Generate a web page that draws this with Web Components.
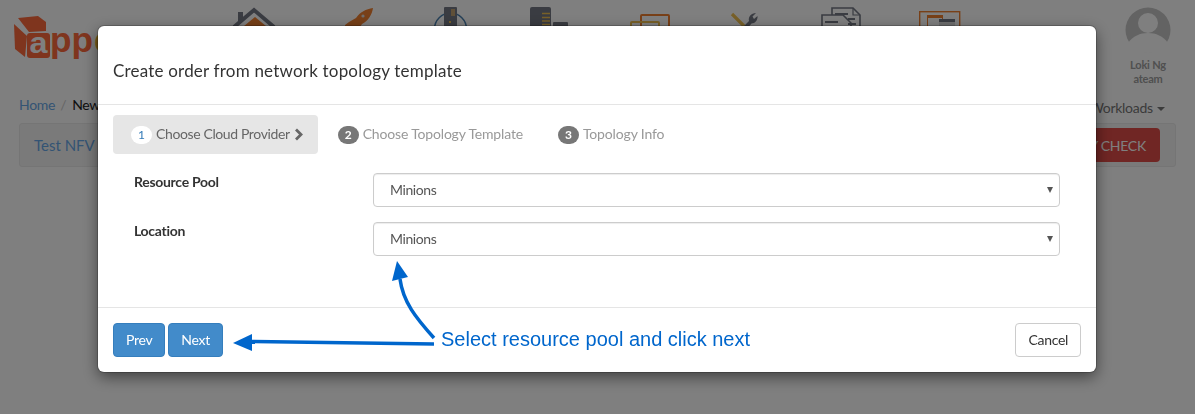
<!DOCTYPE html>
<html>
<head>
<meta charset="utf-8">
<title>Create order</title>
<style>
  html, body { margin: 0; height: 100%; background: #fff; overflow: hidden; }
  body { font-family: "Lato", "Liberation Sans", sans-serif; font-size: 14px; color: #333; }
</style>
</head>
<body>
<app-page></app-page>
<order-modal title="Create order from network topology template">
  <wizard-step slot="steps" num="1" track="-.38" active>Choose Cloud Provider</wizard-step>
  <wizard-step slot="steps" num="2" track="-.17">Choose Topology Template</wizard-step>
  <wizard-step slot="steps" num="3" track="-.15">Topology Info</wizard-step>
  <form-row slot="form" label="Resource Pool" value="Minions"></form-row>
  <form-row slot="form" label="Location" value="Minions"></form-row>
  <modal-button slot="left" kind="primary">Prev</modal-button>
  <modal-button slot="left" kind="primary">Next</modal-button>
  <modal-button slot="right">Cancel</modal-button>
</order-modal>
<tour-note>Select resource pool and click next</tour-note>

<script>
// nav icons are drawn in page coordinates, each svg views its own 98px slot
const DARK = '#747884';
const ORANGE = '#f08030';
const GOLD = '#f0c050';
const NAV_ICONS = [
  // home
  `<path d="M238 12 H243 V19 L238 23 Z" fill="${DARK}"/>
   <path d="M234 27 L254 10 L274 27" fill="none" stroke="${DARK}" stroke-width="4"/>
   <path d="M255 17 L244 26 V32 H266 V26 Z" fill="${ORANGE}"/>`,
  // rocket
  `<path d="M373 8 C366 9 360 12 356 18 L349 22 L345 25 L345 30 H358 L362 24 C368 21 372 15 373 8 Z" fill="${ORANGE}"/>
   <circle cx="363" cy="16" r="1.6" fill="#ddd"/>`,
  // network
  `<circle cx="450.5" cy="29" r="16" fill="none" stroke="#4a80b0" stroke-width="1.5"/>
   <rect x="444" y="7" width="13" height="26" rx="1" fill="${DARK}"/>
   <rect x="451" y="9" width="4" height="7" fill="#c0a070"/>
   <rect x="449" y="21" width="2" height="2" fill="${GOLD}"/>`,
  // servers
  `<rect x="530" y="7" width="21" height="26" rx="2" fill="${DARK}"/>
   <path d="M542 13.5 H550 M542 17.5 H550 M542 21 H550 M542 24.5 H550" stroke="${GOLD}" stroke-width="1.5"/>
   <rect x="553" y="22" width="15" height="10" rx="1" fill="${DARK}"/>`,
  // windows
  `<rect x="641" y="15" width="28" height="20" rx="1" fill="none" stroke="${ORANGE}" stroke-width="2"/>
   <rect x="631" y="22" width="28" height="20" rx="1" fill="none" stroke="${GOLD}" stroke-width="2"/>`,
  // tools
  `<path d="M732 14 L746 28" stroke="${GOLD}" stroke-width="3.2"/>
   <path d="M742 28 L749 21 C748 17 751 13 756 13 L752.5 16.5 L754 19 L757.5 16 C758 20 755 23.5 751.5 23.5 L746 30 Z" fill="${DARK}"/>`,
  // documents
  `<path d="M832 15 V8 H853 L860 15 V30" fill="none" stroke="${DARK}" stroke-width="1.6"/>
   <path d="M853 8 V15 H860" fill="none" stroke="${DARK}" stroke-width="1.2"/>
   <path d="M822 15 H843 L851 23 V32 H822 Z" fill="#fff" stroke="${DARK}" stroke-width="1.6"/>
   <path d="M835 14 H848 M825 22 H838 M848 19 H855 M848 24 H856" stroke="${DARK}" stroke-width="1.8"/>`,
  // layout
  `<rect x="919.7" y="11.7" width="40" height="24" fill="none" stroke="${ORANGE}" stroke-width="1.4"/>
   <rect x="927.5" y="16.5" width="15" height="20" fill="none" stroke="${ORANGE}" stroke-width="1"/>
   <rect x="927" y="15" width="16" height="3" fill="${ORANGE}"/>
   <rect x="939" y="19" width="16" height="16" fill="#ddd"/>
   <rect x="939" y="19" width="16" height="3" fill="${DARK}"/>`
];

class AppPage extends HTMLElement {
  connectedCallback() {
    this.attachShadow({ mode: 'open' });
    const nav = NAV_ICONS.map((p, i) => `<li><svg width="98" height="36" viewBox="${206 + 98 * i} 0 98 36">${p}</svg></li>`).join('');
    this.shadowRoot.innerHTML = `
      <style>
        :host { display: block; height: 414px; box-sizing: border-box; }
        header { display: flex; height: 95px; }
        .logo { width: 206px; flex: none; }
        .logo svg { display: block; }
        ul { display: flex; margin: 0; padding: 0; list-style: none; flex: 1; }
        li { width: 98px; height: 36px; }
        li svg { display: block; }
        .user { width: 70px; margin-right: 12px; text-align: center; font: bold 11px/14px "Lato", sans-serif; letter-spacing: -.2px; color: #a0a0a0; padding-top: 7px; }
        .user svg { display: block; margin: 0 auto 5px; }
        .crumbs { display: flex; align-items: center; height: 18px; padding: 0 19px; letter-spacing: -.3px; }
        .crumbs a { color: #68a8e8; }
        .crumbs i { font-style: normal; color: #ccc; margin: 0 6px 0 5px; }
        .crumbs b { font-weight: normal; color: #222; }
        .crumbs .end { margin-left: auto; padding: 6px 11px 0 0; color: #777; }
        .caret { display: inline-block; border: 4px solid transparent; border-top-color: #777; border-bottom: 0; vertical-align: middle; margin-left: 1px; }
        .panel { display: flex; align-items: center; justify-content: space-between; height: 44px; margin: 10px 19px 0; box-sizing: border-box; background: #f5f5f5; border: 1px solid #ebebeb; border-radius: 3px; padding: 0 15px 0 14px; }
        .panel a { color: #68a8e8; font-size: 15px; }
        .panel button { height: 34px; border: 0; border-radius: 4px; background: #e04c48; color: #fff; font: 14px "Lato", sans-serif; letter-spacing: -.25px; padding: 0 14px; }
      </style>
      <header>
        <div class="logo">
          <svg width="206" height="70" viewBox="0 0 206 70">
            <path d="M18 18 L38 16 L46 22 V31 L29 32 Z" fill="#ff6a3c"/>
            <path d="M14 24 L27 36 L25 57 L15 49 Z" fill="#ff6a3c"/>
            <rect x="27" y="33" width="23" height="25" rx="3" fill="#ff6a3c"/>
            <text x="29.5" y="53" font-family="Liberation Sans" font-size="30" font-weight="bold" fill="#ffffff" textLength="18" lengthAdjust="spacingAndGlyphs">a</text>
            <text x="50" y="52" font-family="Liberation Sans" font-size="35" font-weight="bold" fill="#ff6a3c" textLength="43" lengthAdjust="spacingAndGlyphs">pp</text>
            <text x="94" y="52" font-family="Liberation Sans" font-size="35" font-weight="bold" fill="#f0b030">e</text>
          </svg>
        </div>
        <ul>${nav}</ul>
        <div class="user">
          <svg width="46" height="46" viewBox="0 0 46 46"><circle cx="23" cy="23" r="22.5" fill="#c6c6c6"/><circle cx="23" cy="16" r="10" fill="#fff"/><path d="M3 36 C8 29 15 26 23 26 C31 26 38 29 43 36 C38 43 31 46 23 46 C15 46 8 43 3 36 Z" fill="#fff"/></svg>
          <div>Loki Ng</div><div>ateam</div>
        </div>
      </header>
      <nav class="crumbs"><a>Home</a><i>/</i><b>New Order</b><span class="end">Workloads <span class="caret"></span></span></nav>
      <div class="panel"><a>Test NFV</a><button>VALIDITY CHECK</button></div>
    `;
  }
}

class OrderModal extends HTMLElement {
  connectedCallback() {
    this.attachShadow({ mode: 'open' });
    this.shadowRoot.innerHTML = `
      <style>
        :host { display: block; position: fixed; inset: 0; background: rgba(0,0,0,.5); }
        .dialog { position: absolute; left: 98px; top: 26px; width: 998px; height: 346px; box-sizing: border-box; display: flex; flex-direction: column; background: #fff; border-radius: 6px; box-shadow: 0 0 0 1px rgba(0,0,0,.2), 0 5px 15px rgba(0,0,0,.5); }
        .head { height: 79px; box-sizing: border-box; border-bottom: 1px solid #e5e5e5; padding: 11px 15px 0; display: flex; align-items: center; font-size: 17px; color: #333; letter-spacing: .2px; }
        .body { flex: 1; padding: 10px 15px 0; }
        .steps { display: flex; margin-bottom: 19px; }
        .form { display: grid; gap: 15px; }
        .foot { height: 65px; box-sizing: border-box; border-top: 1px solid #e5e5e5; padding: 15px; display: flex; justify-content: space-between; }
        .left { display: flex; gap: 3px; }
      </style>
      <section class="dialog">
        <div class="head">${this.getAttribute('title')}</div>
        <div class="body">
          <div class="steps"><slot name="steps"></slot></div>
          <div class="form"><slot name="form"></slot></div>
        </div>
        <div class="foot">
          <div class="left"><slot name="left"></slot></div>
          <div><slot name="right"></slot></div>
        </div>
      </section>
    `;
  }
}

class WizardStep extends HTMLElement {
  connectedCallback() {
    this.attachShadow({ mode: 'open' });
    const chevron = this.hasAttribute('active')
      ? `<svg width="9" height="13" viewBox="0 0 9 13"><path d="M2 1.5 L7 6.5 L2 11.5" fill="none" stroke="#666" stroke-width="2.8"/></svg>`
      : '';
    this.shadowRoot.innerHTML = `
      <style>
        :host { display: inline-flex; align-items: center; height: 39px; box-sizing: border-box; padding: 0 15px; margin-right: 5px; border-radius: 4px; color: #999; font-size: 14px; gap: 4px; }
        :host([active]) { background: #e6e6e6; color: #666; padding-left: 18px; }
        b { display: block; width: 21px; height: 18px; line-height: 18px; border-radius: 9px; background: #777; color: #fff; font-size: 12px; text-align: center; }
        :host([active]) b { background: #fff; color: #337ab7; font-weight: normal; }
        span { letter-spacing: ${this.getAttribute('track')}px; padding-bottom: 2px; white-space: nowrap; }
      </style>
      <b>${this.getAttribute('num')}</b><span><slot></slot></span>${chevron}
    `;
  }
}

class FormRow extends HTMLElement {
  connectedCallback() {
    this.attachShadow({ mode: 'open' });
    this.shadowRoot.innerHTML = `
      <style>
        :host { display: grid; grid-template-columns: 239px 687px; padding-left: 21px; height: 34px; }
        label { font-weight: bold; color: #333; font-size: 14px; line-height: 18px; letter-spacing: -.3px; }
        .field { position: relative; height: 34px; }
        select { appearance: none; display: block; height: 34px; width: 100%; box-sizing: border-box; padding: 4px 12px 6px 16px; background: #fff; color: #555; border: 1px solid #ccc; border-radius: 4px; font: 14px "Lato", sans-serif; letter-spacing: -.4px; box-shadow: inset 0 1px 1px rgba(0,0,0,.075); }
        .arrow { position: absolute; right: 7px; top: 14px; border: 3.5px solid transparent; border-top: 6px solid #555; border-bottom: 0; }
      </style>
      <label>${this.getAttribute('label')}</label>
      <div class="field">
        <select><option>${this.getAttribute('value')}</option></select>
        <div class="arrow"></div>
      </div>
    `;
  }
}

class ModalButton extends HTMLElement {
  connectedCallback() {
    this.attachShadow({ mode: 'open' });
    this.shadowRoot.innerHTML = `
      <style>
        :host { display: inline-flex; align-items: center; height: 34px; box-sizing: border-box; padding: 0 12px 2px; border: 1px solid #ccc; border-radius: 4px; font-size: 14px; letter-spacing: -.3px; color: #333; background: #fff; }
        :host([kind=primary]) { background: #428bca; border-color: #357ebd; color: #fff; }
      </style>
      <slot></slot>
    `;
  }
}

class TourNote extends HTMLElement {
  connectedCallback() {
    this.attachShadow({ mode: 'open' });
    this.shadowRoot.innerHTML = `
      <style>
        :host { display: block; position: fixed; inset: 0; pointer-events: none; }
        svg { position: absolute; left: 0; top: 0; }
        span { position: absolute; left: 441px; top: 327px; font: 20px/24px "Liberation Sans", sans-serif; color: #0066cc; white-space: nowrap; }
      </style>
      <svg width="1195" height="414">
        <path d="M434 338 C416 318 403 302 400 279" fill="none" stroke="#0066cc" stroke-width="3.5"/>
        <path d="M397 261 L392 281 L408 277 Z" fill="#0066cc"/>
        <path d="M434 344 L250 341.5" fill="none" stroke="#0066cc" stroke-width="3.5"/>
        <path d="M233 343 L252 334 V351 Z" fill="#0066cc"/>
      </svg>
      <span><slot></slot></span>
    `;
  }
}

customElements.define('app-page', AppPage);
customElements.define('order-modal', OrderModal);
customElements.define('wizard-step', WizardStep);
customElements.define('form-row', FormRow);
customElements.define('modal-button', ModalButton);
customElements.define('tour-note', TourNote);
</script>
</body>
</html>
